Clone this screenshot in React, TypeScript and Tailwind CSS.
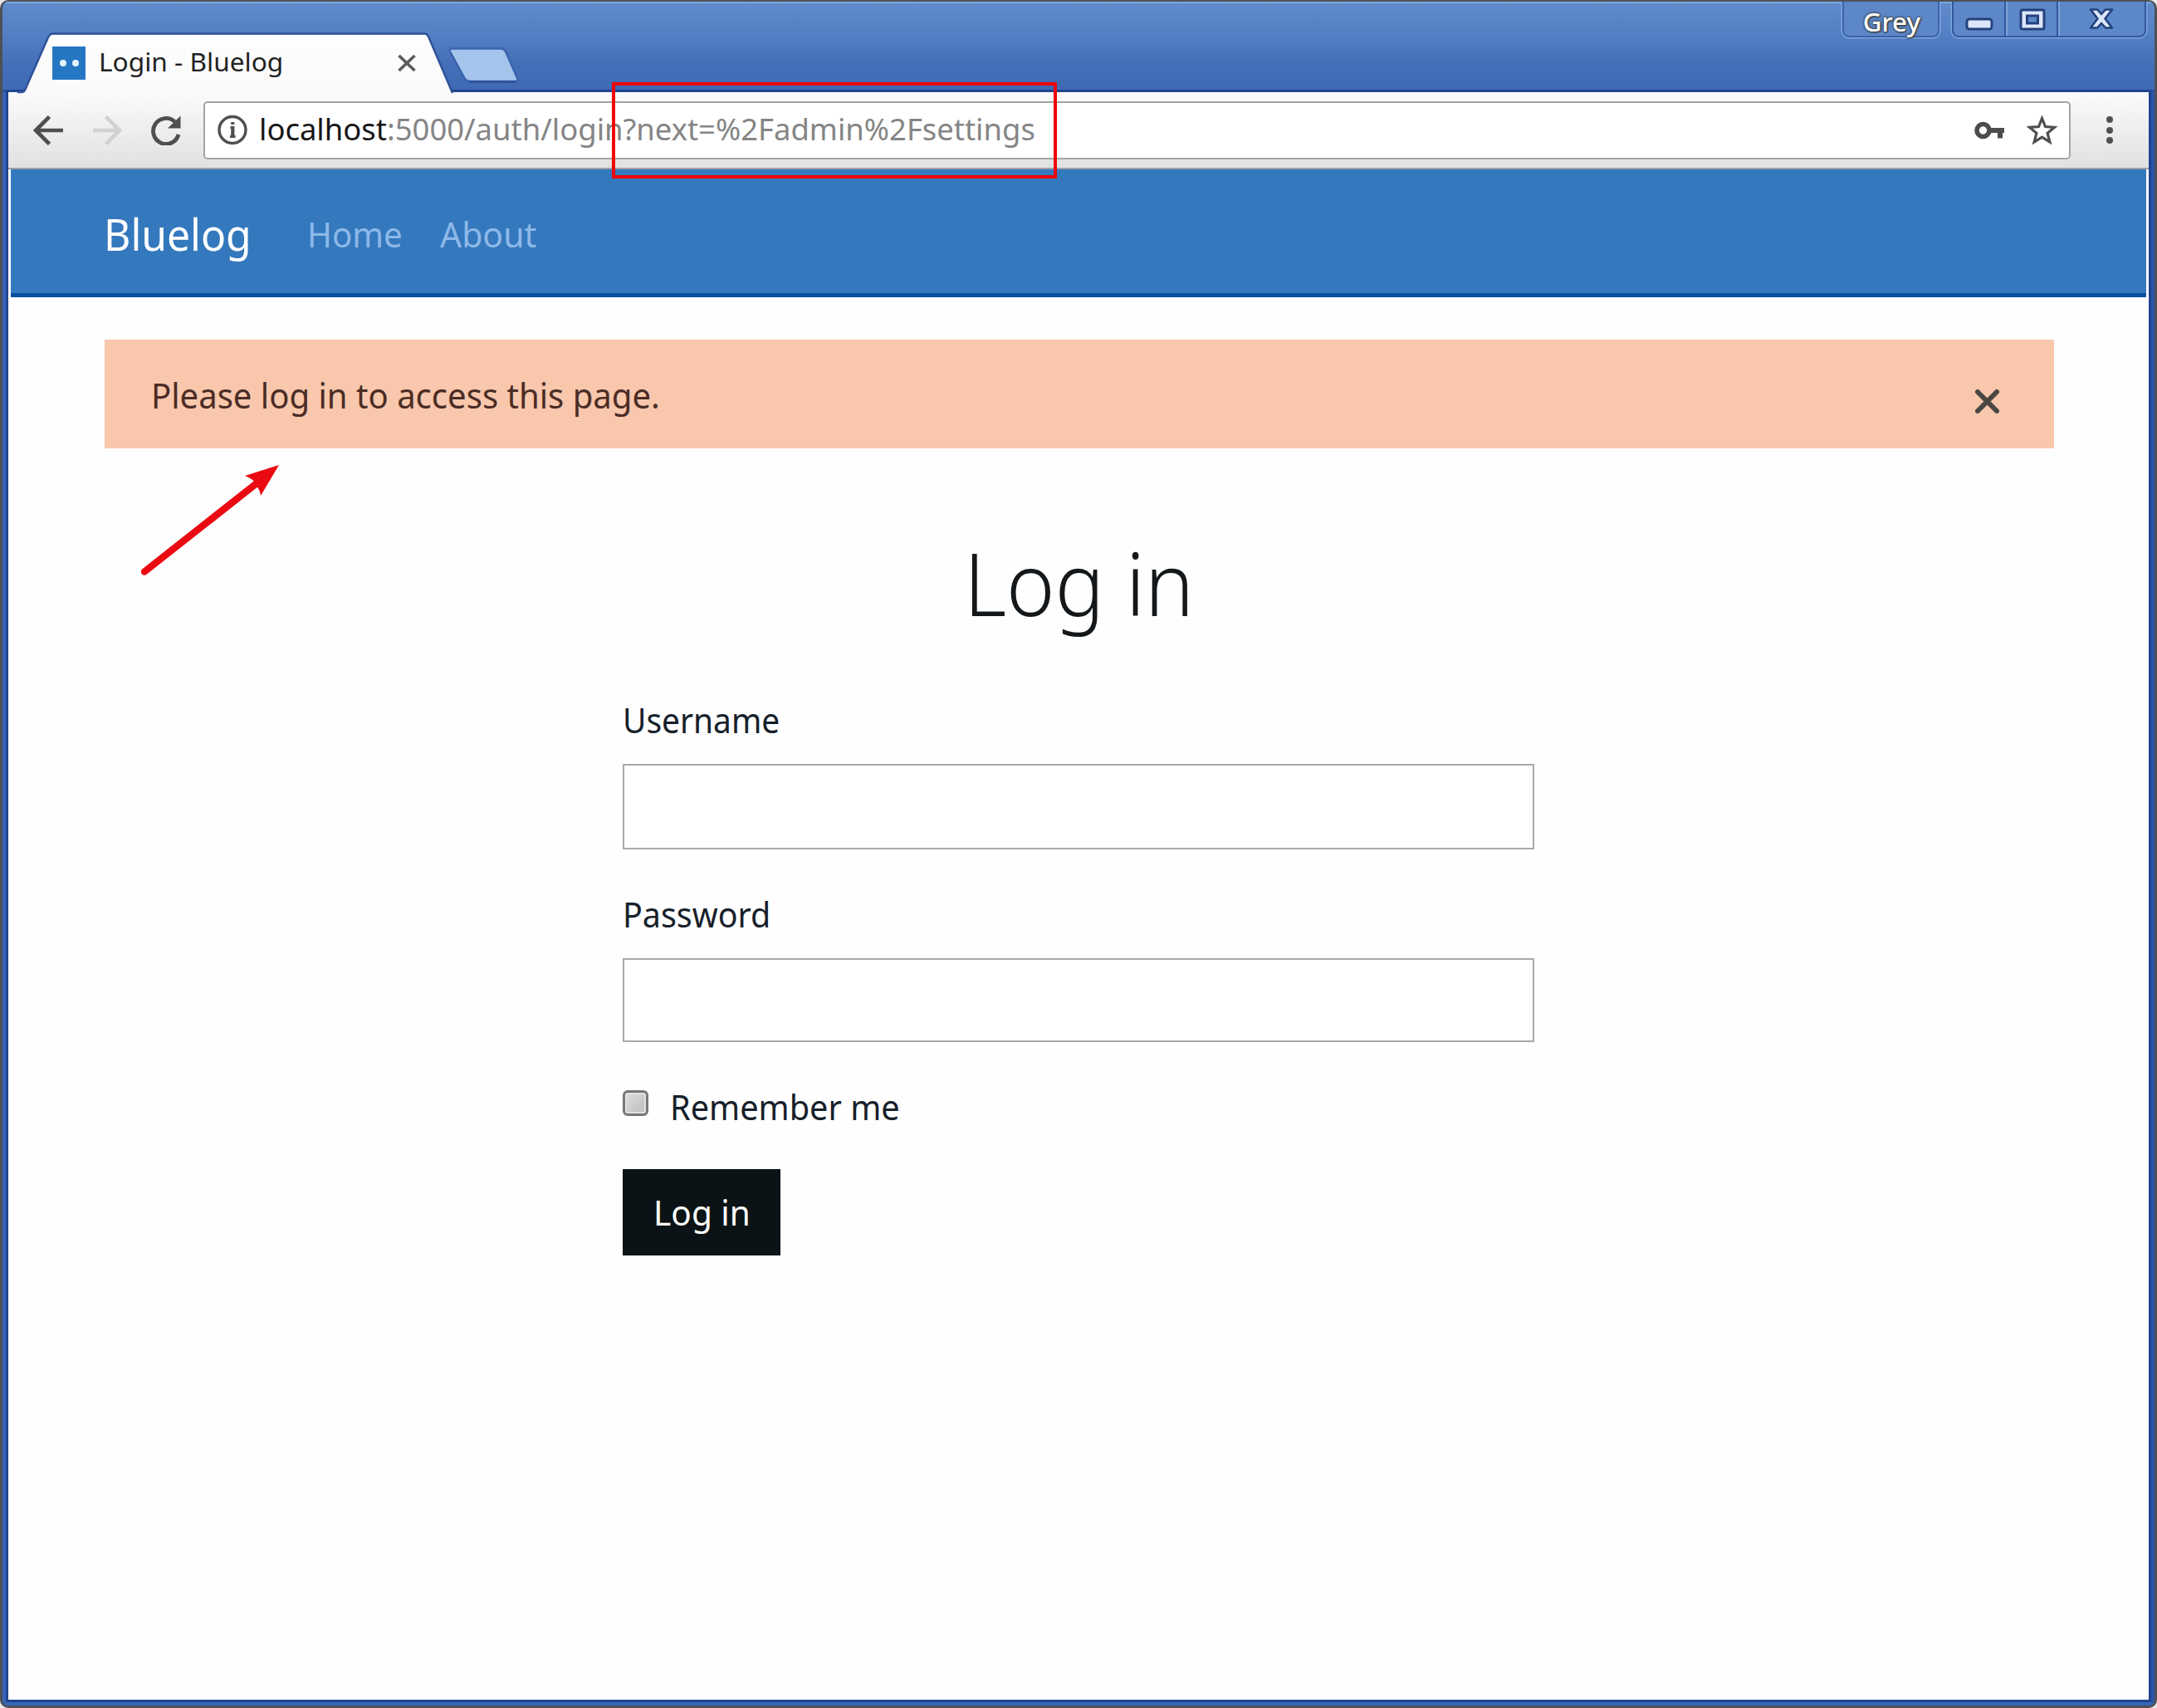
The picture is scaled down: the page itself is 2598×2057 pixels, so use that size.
import type { ReactNode } from "react";

function Favicon() {
  return (
    <div className="flex h-10 w-10 shrink-0 items-center justify-center gap-[7px] bg-[#2577c4]">
      <span className="h-2 w-2 rounded-full bg-[#e4f4fc]" />
      <span className="h-2 w-2 rounded-full bg-[#e4f4fc]" />
    </div>
  );
}

function TabShape() {
  return (
    <svg className="absolute left-0 top-0 h-[74px] w-[526px]" viewBox="0 0 526 74" fill="none">
      <defs>
        <linearGradient id="tab" x1="0" y1="0" x2="0" y2="1">
          <stop offset="0" stopColor="#fefefe" />
          <stop offset="1" stopColor="#fafafa" />
        </linearGradient>
      </defs>
      <path d="M0 73.500H6Q8 73.500 9 71L37.500 6.500Q39 2.500 43 2.500H490.500Q493.500 2.500 495 6L524 74V74H0Z" fill="url(#tab)" />
      <path d="M0 72H5Q8 72 9.500 68.500L37 6Q39 1.500 43 1.500H490.500Q493.500 1.500 495 5L524 73" stroke="#2f529a" strokeWidth="2.500" />
    </svg>
  );
}

function Tab() {
  return (
    <div className="relative ml-[12px] mt-[37px] flex h-[74px] w-[526px] items-center pl-[42px]">
      <TabShape />
      <div className="relative mt-0">
        <Favicon />
      </div>
      <span className="relative ml-[16px] mt-[-4px] w-[224px] origin-left scale-x-[1.02] whitespace-nowrap text-[31px] leading-10 text-[#222]">
        Login - Bluelog
      </span>
      <svg className="relative ml-[136px] mt-0 h-5 w-[22px]" viewBox="0 0 22 20" fill="none" stroke="#5c5c5c" strokeWidth="3.600">
        <path d="M1.500 1L20.500 19M20.500 1L1.500 19" />
      </svg>
    </div>
  );
}

function NewTab() {
  return (
    <svg className="ml-[-10px] mt-[53px] h-[46px] w-[90px] shrink-0" viewBox="0 0 90 46">
      <path
        d="M7 3.500H66Q70 3.500 72 7L86 39Q87 43 84 43H29Q25 43 23 40L5 7Q4 3.500 7 3.500Z"
        fill="#a5c4eb"
        stroke="#3a64ae"
        strokeWidth="2.500"
      />
      <path d="M28 43.500H84" stroke="#2d5099" strokeWidth="2.500" />
    </svg>
  );
}

function WindowControls() {
  return (
    <div className="ml-auto mr-[10px] flex h-[44px]">
      <div className="mr-[15px] flex h-[43px] w-[117px] justify-center rounded-b-[8px] border-2 border-t-0 border-[#3b62a9] bg-[#5c88c9] shadow-[0_0_0_1.5px_#7fa4da]">
        <span className="ml-[1px] mt-[5px] origin-center scale-x-[1.01] text-[31px] font-medium leading-[38px] text-white [text-shadow:0_0_3px_#3a3a3a,0_0_3px_#3a3a3a,1px_1px_2px_#3a3a3a]">
          Grey
        </span>
      </div>
      <div className="flex h-[43px] w-[234px] rounded-b-[8px] border-2 border-t-0 border-[#3258a0] bg-[#5c88c9] shadow-[0_0_0_1.5px_#7fa4da]">
        <div className="flex w-[63px] justify-center border-r-2 border-[#3258a0] pt-[19px]">
          <svg className="h-4 w-[34px]" viewBox="0 0 34 16">
            <rect x="2" y="2" width="30" height="12" rx="3" fill="#dbe6fb" stroke="#24417c" strokeWidth="3" />
          </svg>
        </div>
        <div className="flex w-[63px] justify-center border-l-2 border-r-2 border-l-[#7fa4da] border-r-[#3258a0] pt-[8px]">
          <svg className="h-[27px] w-8" viewBox="0 0 32 27">
            <rect x="2" y="2" width="28" height="23" rx="2" fill="#dbe6fb" stroke="#24417c" strokeWidth="3" />
            <rect x="9.500" y="9" width="13" height="9" fill="#5c88c9" stroke="#24417c" strokeWidth="3" />
          </svg>
        </div>
        <div className="flex flex-1 justify-center border-l-2 border-[#7fa4da] pr-[2px] pt-[7px]">
          <svg className="h-[27px] w-8" viewBox="0 0 32 27">
            <path
              d="M3 2.500H11L16 8L21 2.500H29L20.500 13.500L29 24.500H21L16 19L11 24.500H3L11.500 13.500Z"
              fill="#dbe6fb"
              stroke="#24417c"
              strokeWidth="2.600"
              strokeLinejoin="round"
            />
          </svg>
        </div>
      </div>
    </div>
  );
}

function Toolbar() {
  return (
    <div className="flex h-[93px] shrink-0 items-center border-b-2 border-[#a09fa8] bg-gradient-to-b from-[#fbfbfb] to-[#e2e1e2] pl-[30px]">
      <svg className="h-9 w-[36px]" viewBox="0 0 36 36" fill="none" stroke="#4f4f4f" strokeWidth="4.600">
        <path d="M36 18H3M19.500 1.500L3 18L19.500 34.500" />
      </svg>
      <svg className="ml-9 h-9 w-[35px]" viewBox="0 0 35 36" fill="none" stroke="#d2d2d2" strokeWidth="4.600">
        <path d="M0 18H32M15.500 1.500L32 18L15.500 34.500" />
      </svg>
      <svg className="ml-[34px] h-9 w-[37px]" viewBox="0 0 37 36" fill="none">
        <path d="M34 23A15.500 15.500 0 1 1 29.500 7.500" stroke="#4f4f4f" strokeWidth="4.800" />
        <path d="M36.500 0.500V15.500H21Z" fill="#4f4f4f" />
      </svg>
      <div className="ml-[27px] flex h-[70px] w-[2249px] items-center rounded-[5px] border-[2.500px] border-[#a4a4a4] bg-white pl-[15px]">
        <svg className="h-[37px] w-[37px] shrink-0" viewBox="0 0 37 37" fill="none">
          <circle cx="18" cy="18.500" r="16" stroke="#4f4f4f" strokeWidth="3.400" />
          <path d="M15.500 15.500H19M15 26.500H21.500M16.200 10.500H20.300" stroke="#4f4f4f" strokeWidth="3.200" />
          <path d="M18.300 14V28" stroke="#4f4f4f" strokeWidth="4.200" />
        </svg>
        <div className="mt-[-1px] ml-[13px] origin-left scale-x-[1.012] whitespace-nowrap text-[36px] leading-[48px] text-[#858585]">
          <span className="text-[#161616]">localhost</span>:5000/auth/login?next=%2Fadmin%2Fsettings
        </div>
        <svg className="ml-auto h-[22px] w-[37px]" viewBox="0 0 37 22" fill="none">
          <circle cx="10.500" cy="11" r="7.500" stroke="#4c4c4c" strokeWidth="5.600" />
          <path d="M18 8H36V14H34V20.500H28V14H18Z" fill="#4c4c4c" />
        </svg>
        <svg className="ml-[26px] mr-[14px] h-9 w-[37px]" viewBox="0 0 37 36" fill="none">
          <path
            d="M18.500 3.500L22.500 13.600L33.500 14.400L25.100 21.300L27.900 32L18.500 26.200L9.100 32L11.900 21.300L3.500 14.400L14.500 13.600Z"
            stroke="#4f4f4f"
            strokeWidth="3.200"
          />
        </svg>
      </div>
      <div className="ml-[43px] flex flex-col gap-[4.500px]">
        <span className="h-2 w-2 rounded-full bg-[#505050]" />
        <span className="h-2 w-2 rounded-full bg-[#505050]" />
        <span className="h-2 w-2 rounded-full bg-[#505050]" />
      </div>
    </div>
  );
}

function Navbar() {
  return (
    <nav className="mx-[3px] flex h-[154px] shrink-0 items-center border-b-[5px] border-[#0650a3] bg-[#3478bd] pl-[112px] pt-[7px]">
      <span className="w-[245px] origin-left scale-x-[0.94] text-[53px] leading-[72px] text-white">Bluelog</span>
      <span className="w-[160px] origin-left scale-x-[0.96] text-[42px] leading-[58px] text-[#8db9e8]">Home</span>
      <span className="origin-left scale-x-[0.975] text-[42px] leading-[58px] text-[#8db9e8]">About</span>
    </nav>
  );
}

function Field({ label, children }: { label: ReactNode; children: ReactNode }) {
  return (
    <div className="flex flex-col">
      <label className="h-12 text-[42px] leading-[48px] text-[#16202a]">{label}</label>
      {children}
    </div>
  );
}

export default function App() {
  return (
    <div className="h-[2057px] w-[2598px] overflow-hidden bg-[#e9e9ea] font-['Noto_Sans',sans-serif]">
      <div className="relative flex h-full flex-col overflow-hidden rounded-[10px] border-[3px] border-t-[2px] border-[#4d5156] bg-[#3a68bb]">
        <div className="flex h-[109px] shrink-0 border-t-2 border-[#7ba6dc] bg-[linear-gradient(#5f8bcb_0%,#5380c4_35%,#446eb7_70%,#4069b3_100%)] shadow-[inset_0_-3px_0_#2f529a]">
          <div className="-mt-[2px] ml-[-3px] flex flex-1 pl-[9px]">
            <Tab />
            <NewTab />
            <WindowControls />
          </div>
        </div>
        <div className="flex flex-1 flex-col border-x-[7px] border-b-[7px] border-l-[#3763b8] border-r-[#2c55a6] border-b-[#3566b8]">
          <div className="flex flex-1 flex-col bg-[#fefefe] shadow-[0_0_0_3px_#1f458f]">
            <Toolbar />
            <Navbar />
            <main className="flex flex-col pl-[116px] pr-[114px] pt-[51px]">
              <div className="flex h-[131px] items-center bg-[#f8c7ac] pl-[56px] pr-[65px]">
                <p className="mt-[3px] origin-left scale-x-[0.954] whitespace-nowrap text-[42px] leading-[58px] text-[#4b2c25]">
                  Please log in to access this page.
                </p>
                <svg className="ml-auto mt-[18px] h-[31px] w-[31px]" viewBox="0 0 31 31" fill="none" stroke="#4a4743" strokeWidth="6" strokeLinecap="round">
                  <path d="M4 4L27 27M27 4L4 27" />
                </svg>
              </div>
              <form className="ml-[624px] mt-[109px] flex w-[1098px] flex-col">
                <h1 className="ml-[411px] h-[106px] origin-left scale-x-[0.945] whitespace-nowrap text-[105px] font-light leading-[106px] text-[#14181a]">
                  Log in
                </h1>
                <div className="mt-[88px]">
                  <Field label={<span className="inline-block origin-left scale-x-[0.926]">Username</span>}>
                    <input className="mt-[29px] h-[103px] w-full border-[2.500px] border-[#a9a9ac] bg-white" />
                  </Field>
                </div>
                <div className="mt-[54px]">
                  <Field label={<span className="inline-block origin-left scale-x-[0.938]">Password</span>}>
                    <input className="mt-[29px] h-[101px] w-full border-[2.500px] border-[#a9a9ac] bg-white" />
                  </Field>
                </div>
                <div className="mt-[52px] flex h-[50px] items-center">
                  <span className="mt-[-7px] h-[31px] w-[31px] rounded-[6px] border-[3px] border-[#777] bg-gradient-to-br from-[#dedede] to-[#bcbcbc] shadow-[inset_0_0_0_2px_#e2e2e2]" />
                  <span className="ml-[26px] mt-[1px] origin-left scale-x-[0.945] text-[42px] leading-[50px] text-[#16202a]">Remember me</span>
                </div>
                <button type="button" className="mt-[51px] h-[104px] w-[190px] bg-[#0b1316] text-[42px] leading-[104px] text-white">
                  <span className="inline-block scale-x-[0.965] whitespace-nowrap">Log in</span>
                </button>
              </form>
            </main>
          </div>
        </div>

        {/* Annotations over the window */}
        <div className="absolute left-[734px] top-[97px] h-[116px] w-[536px] border-[4.500px] border-[#ee0606]" />
        <svg className="absolute left-[162px] top-[552px] h-[150px] w-[180px]" viewBox="0 0 180 150">
          <path d="M9 134.500L148 25" stroke="#ea0a12" strokeWidth="8.500" strokeLinecap="round" />
          <path d="M171 6L130 19Q141 23 142 29Q148 35 149 43Z" fill="#ea0a12" />
        </svg>
      </div>
    </div>
  );
}
